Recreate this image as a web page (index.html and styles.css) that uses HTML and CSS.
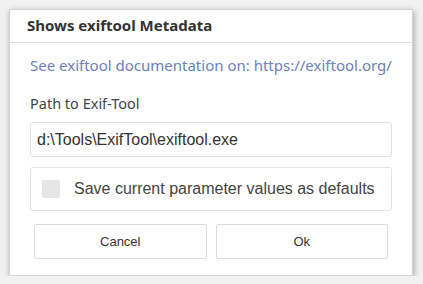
FILE: index.html
```html
<!DOCTYPE html>
<html lang="en">
<head>
    <meta charset="UTF-8">
    <title>Shows exiftool Metadata</title>
    <link rel="stylesheet" href="styles.css">
</head>
<body>
    <div class="dialog">
        <div class="dialog-header">Shows exiftool Metadata</div>
        <div class="dialog-body">
            <a class="doc-link" href="#">See exiftool documentation on: https://exiftool.org/</a>
            <label class="field-label" for="exif-path">Path to Exif-Tool</label>
            <input class="text-input" id="exif-path" type="text" value="d:\Tools\ExifTool\exiftool.exe">
            <div class="check-panel">
                <span class="check-box"></span>
                <span class="check-text">Save current parameter values as defaults</span>
            </div>
            <div class="buttons">
                <button class="btn">Cancel</button>
                <button class="btn">Ok</button>
            </div>
        </div>
    </div>
</body>
</html>
```

FILE: styles.css
```css
body {
    margin: 0;
    background-color: #f1f1f1;
}
.dialog {
    margin: 9px 0 0 9px;
    width: 402px;
    height: 265px;
    background: #fff;
    border: 1px solid #d4d4d4;
    box-shadow: 1px 2px 6px rgba(0, 0, 0, 0.32);
    display: flex;
    flex-direction: column;
}
.dialog-header {
    height: 32px;
    border-bottom: 1px solid #e0e0e0;
    padding-left: 17px;
    font-family: "Noto Sans", sans-serif;
    font-weight: bold;
    font-size: 15px;
    line-height: 30px;
    color: #333;
}
.dialog-body {
    padding: 0 20px;
    display: flex;
    flex-direction: column;
}
.doc-link {
    margin-top: 10px;
    font-family: "Noto Sans", sans-serif;
    font-size: 15px;
    line-height: 24px;
    color: #6d7fc0;
    text-decoration: none;
}
.field-label {
    margin-top: 16px;
    font-family: "Noto Sans", sans-serif;
    font-size: 14.5px;
    line-height: 20px;
    color: #444;
}
.text-input {
    margin-top: 9px;
    height: 35px;
    box-sizing: border-box;
    border: 1px solid #e2e2e2;
    border-radius: 3px;
    padding: 0 6px;
    font-family: "Liberation Sans", Arial, sans-serif;
    font-size: 16px;
    color: #333;
    outline: none;
}
.check-panel {
    margin-top: 10px;
    height: 44px;
    box-sizing: border-box;
    border: 1px solid #e2e2e2;
    border-radius: 3px;
    display: flex;
    align-items: center;
    padding-left: 11px;
}
.check-box {
    width: 18px;
    height: 18px;
    border-radius: 2px;
    background: #e6e6e6;
}
.check-text {
    margin-left: 14px;
    font-family: "Liberation Sans", Arial, sans-serif;
    font-size: 16px;
    color: #444;
}
.buttons {
    margin-top: 13px;
    padding: 0 4px;
    display: flex;
    gap: 9px;
}
.btn {
    flex: 1;
    height: 35px;
    background: #fff;
    border: 1px solid #dcdcdc;
    border-radius: 2px;
    font-family: "Liberation Sans", Arial, sans-serif;
    font-size: 13px;
    color: #333;
}
```
